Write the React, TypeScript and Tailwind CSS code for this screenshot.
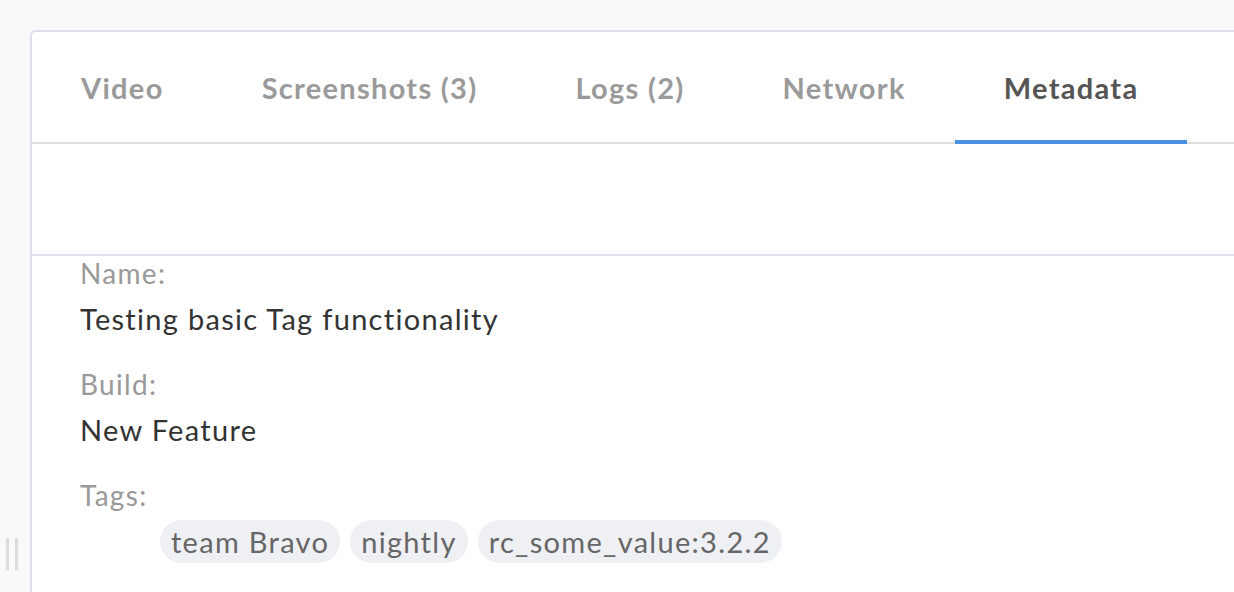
import React from 'react';

const tabs = [
  { label: 'Video', active: false },
  { label: 'Screenshots (3)', active: false },
  { label: 'Logs (2)', active: false },
  { label: 'Network', active: false },
  { label: 'Metadata', active: true },
];

const fields = [
  { label: 'Name:', value: 'Testing basic Tag functionality' },
  { label: 'Build:', value: 'New Feature' },
];

const tags = ['team Bravo', 'nightly', 'rc_some_value:3.2.2'];

export default function App() {
  return (
    <div
      className="flex h-[592px] w-[1234px] overflow-hidden bg-[#f9f9f9] tracking-[1.3px]"
      style={{ fontFamily: 'Lato, "Open Sans", sans-serif' }}
    >
      {/* resize handle */}
      <div className="flex w-[30px] shrink-0 flex-col items-center justify-end pb-[22px]">
        <div className="flex gap-[6px] pr-[6px]">
          <div className="h-[32px] w-[3px] bg-[#dcdcdc]" />
          <div className="h-[32px] w-[3px] bg-[#dcdcdc]" />
        </div>
      </div>

      {/* card */}
      <div className="mt-[30px] flex-1 rounded-tl-md border-l-2 border-t-2 border-[#dde0ec] bg-white">
        {/* Tabs */}
        <div className="flex h-[112px] border-b-2 border-[#dcdcdc]">
          {tabs.map((tab) => (
            <div
              key={tab.label}
              className={`relative flex shrink-0 items-center whitespace-nowrap px-[49px] pt-[2px] text-[29px] font-bold ${
                tab.active ? 'text-[#555555]' : 'text-[#9a9a9a]'
              }`}
            >
              {tab.label}
              {tab.active && (
                <div className="absolute inset-x-0 -bottom-[2px] h-[4px] bg-[#4a90e2]" />
              )}
            </div>
          ))}
        </div>

        {/* Empty toolbar area */}
        <div className="h-[112px] border-b-2 border-[#dde0ec]" />

        {/* Metadata */}
        <div className="pl-[48px]">
          {fields.map((f) => (
            <div key={f.label} className="mb-[28px]">
              <div className="text-[28px] leading-[34px] text-[#999999]">{f.label}</div>
              <div className="mt-[9px] text-[29px] leading-[40px] text-[#333333]">{f.value}</div>
            </div>
          ))}
          <div>
            <div className="text-[28px] leading-[34px] text-[#999999]">Tags:</div>
            <div className="mt-[8px] flex gap-[10px] pl-[80px]">
              {tags.map((t) => (
                <span
                  key={t}
                  className="whitespace-nowrap rounded-full bg-[#eff0f3] px-[11px] text-[29px] leading-[43px] text-[#666666]"
                >
                  {t}
                </span>
              ))}
            </div>
          </div>
        </div>
      </div>
    </div>
  );
}
